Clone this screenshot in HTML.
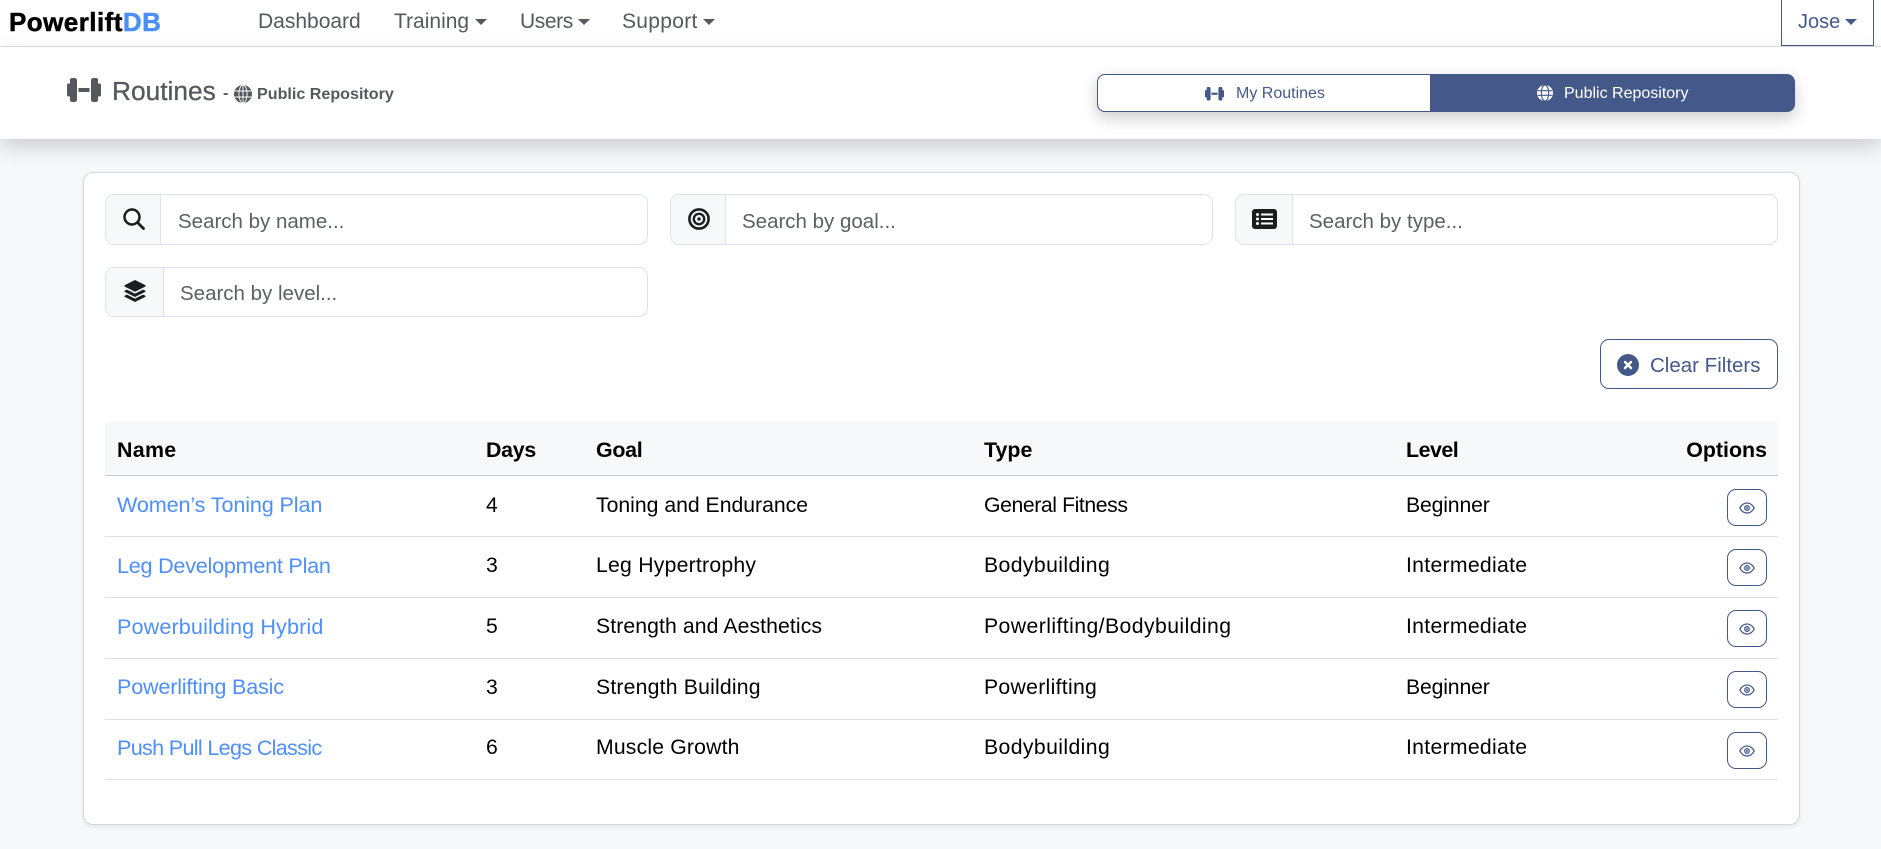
<!DOCTYPE html>
<html lang="en"><head><meta charset="utf-8"><title>Routines - PowerliftDB</title>
<style>
*{box-sizing:border-box}
html,body{margin:0;padding:0}
body{width:1881px;height:849px;overflow:hidden;position:relative;background:#f7f8fa;font-family:"Liberation Sans",sans-serif;color:#000}
.a{position:absolute}
.t{position:absolute;white-space:nowrap;line-height:30px;height:30px}
.nav{left:0;top:0;width:1881px;height:47px;background:#fff;border-bottom:1px solid #dfe0e6}
.n{font-size:21px;color:#55595e}
.caret{position:absolute;width:0;height:0;border-left:6px solid transparent;border-right:6px solid transparent;border-top:6.5px solid #55595e}
.head{left:0;top:47px;width:1881px;height:92px;background:#fff;box-shadow:0 8px 20px rgba(0,0,0,.17)}
.card{left:83px;top:172px;width:1717px;height:653px;background:#fff;border:1px solid #d5d7da;border-radius:10px;box-shadow:0 2px 5px rgba(0,0,0,.07)}
.inp{position:absolute;background:#fff;border:1px solid #dfe2e7;border-radius:9px;overflow:hidden}
.add{position:absolute;left:0;top:0;bottom:0;background:#f7f8fa;border-right:1px solid #dfe2e7}
.ph{font-size:20.5px;color:#5c6065}
.th{font-size:21.4px;font-weight:700;color:#000}
.td{font-size:21.2px;color:#000}
.lk{font-size:21.6px;color:#4f8ffb}
.line{position:absolute;left:105px;width:1673px;height:1px;background:#dfe0e4}
.eye{position:absolute;left:1727px;width:40px;height:37px;background:#fff;border:1px solid #44598a;border-radius:9px}
.eye svg{position:absolute;left:11px;top:12px}
</style></head><body>
<div class="a nav"></div>
<div class="t" style="left:9px;top:7px;font-size:26px;font-weight:700;letter-spacing:.45px;-webkit-text-stroke:.5px #000">Powerlift<span style="color:#4b8ff8;-webkit-text-stroke:.5px #4b8ff8">DB</span></div>
<div class="t n" style="left:258px;top:7px">Dashboard</div>
<div class="t n" style="left:394px;top:7px">Training</div><div class="caret" style="left:475px;top:19px"></div>
<div class="t n" style="left:520px;top:7px;letter-spacing:-.4px">Users</div><div class="caret" style="left:578px;top:19px"></div>
<div class="t n" style="left:622px;top:7px;letter-spacing:.3px">Support</div><div class="caret" style="left:703px;top:19px"></div>
<div class="a" style="left:1781px;top:-2px;width:93px;height:48px;border:1px solid #44598a;background:#fff"></div>
<div class="t n" style="left:1798px;top:7px;color:#44598a;font-size:20px">Jose</div><div class="caret" style="left:1845px;top:19px;border-top-color:#44598a"></div>

<div class="a head"></div>
<svg class="a" style="left:67px;top:78px" width="34" height="24" viewBox="0 0 34 24" fill="#55595e"><path d="M5 0h2.500C9 0 10 1 10 2.500v19c0 1.500-1 2.500-2.500 2.500H5c-1.200 0-2-.8-2-2v-3.500H1.500C.6 18.500 0 18 0 17V7c0-1 .6-1.500 1.500-1.500H3V2c0-1.200.8-2 2-2z"/><rect x="11.500" y="10" width="11" height="4"/><path d="M29 0h-2.500C25 0 24 1 24 2.500v19c0 1.500 1 2.500 2.500 2.500H29c1.200 0 2-.8 2-2v-3.500h1.500c.9 0 1.500-.5 1.500-1.500V7c0-1-.6-1.500-1.500-1.500H31V2c0-1.200-.8-2-2-2z"/></svg>
<div class="t" style="left:112px;top:76px;font-size:26.3px;font-weight:400;color:#55595e;-webkit-text-stroke:.3px #55595e">Routines</div>
<div class="t" style="left:223px;top:79px;font-size:16px;font-weight:700;color:#55595e">-</div>
<svg class="a" style="left:234px;top:85px" width="18" height="18" viewBox="0 0 24 24"><circle cx="12" cy="12" r="12" fill="#55595e"/><g fill="none" stroke="#fff" stroke-width="1.200"><ellipse cx="12" cy="12" rx="5.500" ry="12"/><path d="M1 8h22M1 16h22M12 0v24"/></g></svg>
<div class="t" style="left:257px;top:79px;font-size:16.100px;font-weight:700;color:#55595e">Public Repository</div>

<div class="a" style="left:1097px;top:74px;width:698px;height:38px;border-radius:8px;box-shadow:0 6px 16px rgba(0,0,0,.2);background:#44598a"></div>
<div class="a" style="left:1097px;top:74px;width:333px;height:38px;border:1.500px solid #44598a;border-right:0;border-radius:8px 0 0 8px;background:#fff"></div>
<svg class="a" style="left:1205px;top:87px" width="19" height="13.500" viewBox="0 0 34 24" fill="#44598a"><path d="M5 0h2.500C9 0 10 1 10 2.500v19c0 1.500-1 2.500-2.500 2.500H5c-1.200 0-2-.8-2-2v-3.500H1.500C.6 18.500 0 18 0 17V7c0-1 .6-1.500 1.500-1.500H3V2c0-1.200.8-2 2-2z"/><rect x="11.500" y="10" width="11" height="4"/><path d="M29 0h-2.500C25 0 24 1 24 2.500v19c0 1.500 1 2.500 2.500 2.500H29c1.200 0 2-.8 2-2v-3.500h1.500c.9 0 1.500-.5 1.500-1.500V7c0-1-.6-1.500-1.500-1.500H31V2c0-1.200-.8-2-2-2z"/></svg>
<div class="t" style="left:1236px;top:79px;font-size:16px;color:#44598a">My Routines</div>
<svg class="a" style="left:1537px;top:85px" width="16" height="16" viewBox="0 0 24 24"><circle cx="12" cy="12" r="12" fill="#fff"/><g fill="none" stroke="#44598a" stroke-width="1.700"><ellipse cx="12" cy="12" rx="5.500" ry="12"/><path d="M1 8.500h22M1 15.500h22"/></g></svg>
<div class="t" style="left:1564px;top:79px;font-size:16px;color:#fff">Public Repository</div>

<div class="a card"></div>

<div class="inp" style="left:105px;top:194px;width:543px;height:51px"><div class="add" style="width:55px"></div></div>
<svg class="a" style="left:123px;top:208px" width="22" height="22" viewBox="0 0 22 22" fill="none" stroke="#1b1e21"><circle cx="9" cy="9" r="7.500" stroke-width="2.500"/><path d="M14.500 14.500l6 6" stroke-width="2.800" stroke-linecap="round"/></svg>
<div class="t ph" style="left:178px;top:207px">Search by name...</div>

<div class="inp" style="left:670px;top:194px;width:543px;height:51px"><div class="add" style="width:55px"></div></div>
<svg class="a" style="left:688px;top:208px" width="22" height="22" viewBox="0 0 22 22"><circle cx="11" cy="11" r="9.600" fill="none" stroke="#1b1e21" stroke-width="2.600"/><circle cx="11" cy="11" r="5.200" fill="none" stroke="#1b1e21" stroke-width="2.400"/><circle cx="11" cy="11" r="1.700" fill="#1b1e21"/></svg>
<div class="t ph" style="left:742px;top:207px">Search by goal...</div>

<div class="inp" style="left:1235px;top:194px;width:543px;height:51px"><div class="add" style="width:57px"></div></div>
<svg class="a" style="left:1252px;top:209px" width="25" height="20" viewBox="0 0 25 20"><rect width="25" height="20" rx="3" fill="#1b1e21"/><g fill="#fff"><circle cx="5.500" cy="5.500" r="1.500"/><circle cx="5.500" cy="10" r="1.500"/><circle cx="5.500" cy="14.500" r="1.500"/><rect x="9" y="4.500" width="12" height="2"/><rect x="9" y="9" width="12" height="2"/><rect x="9" y="13.500" width="12" height="2"/></g></svg>
<div class="t ph" style="left:1309px;top:207px">Search by type...</div>

<div class="inp" style="left:105px;top:267px;width:543px;height:50px"><div class="add" style="width:58px"></div></div>
<svg class="a" style="left:124px;top:280px" width="22" height="22" viewBox="0 0 22 22" fill="#1b1e21"><path d="M11 0l10.500 5.300v1.200L11 11.800.5 6.500V5.300z"/><path d="M3 9.600L.5 10.800v1L11 17l10.500-5.200v-1L19 9.600l-8 4z"/><path d="M3 14.600L.5 15.800v1L11 22l10.500-5.200v-1L19 14.600l-8 4z"/></svg>
<div class="t ph" style="left:180px;top:279px">Search by level...</div>

<div class="a" style="left:1600px;top:339px;width:178px;height:50px;border:1px solid #44598a;border-radius:9px;background:#fff"></div>
<svg class="a" style="left:1617px;top:354px" width="22" height="22" viewBox="0 0 22 22"><circle cx="11" cy="11" r="11" fill="#44598a"/><path d="M8 8l6 6M14 8l-6 6" stroke="#fff" stroke-width="2.400" stroke-linecap="round"/></svg>
<div class="t" style="left:1650px;top:351px;font-size:20.500px;color:#44598a">Clear Filters</div>

<div class="a" style="left:105px;top:422px;width:1673px;height:54px;background:#f7f8fa;border-bottom:1px solid #c9cbcf"></div>
<div class="t th" style="left:117px;top:435px;letter-spacing:.3px">Name</div>
<div class="t th" style="left:486px;top:435px;letter-spacing:-.3px">Days</div>
<div class="t th" style="left:596px;top:435px;letter-spacing:-.3px">Goal</div>
<div class="t th" style="left:984px;top:435px">Type</div>
<div class="t th" style="left:1406px;top:435px;letter-spacing:-.5px">Level</div>
<div class="t th" style="right:114px;top:435px">Options</div>

<div class="t lk" style="left:117px;top:490px;letter-spacing:-.13px">Women’s Toning Plan</div>
<div class="t td" style="left:486px;top:491px">4</div>
<div class="t td" style="left:596px;top:491px">Toning and Endurance</div>
<div class="t td" style="left:984px;top:491px;letter-spacing:-.4px">General Fitness</div>
<div class="t td" style="left:1406px;top:491px;letter-spacing:-.15px">Beginner</div>
<div class="eye" style="top:489px"><svg width="16" height="12" viewBox="0 0 16 12" fill="none" stroke="#44598a" stroke-width="1.300"><path d="M.8 6C2.500 2.800 5 1 8 1s5.500 1.800 7.200 5C13.500 9.200 11 11 8 11S2.500 9.200.8 6z"/><circle cx="8" cy="6" r="2.300"/><circle cx="8" cy="6" r="1" fill="#44598a" stroke="none"/></svg></div>
<div class="line" style="top:536px"></div>

<div class="t lk" style="left:117px;top:551px;letter-spacing:-.24px">Leg Development Plan</div>
<div class="t td" style="left:486px;top:551px">3</div>
<div class="t td" style="left:596px;top:551px;letter-spacing:.24px">Leg Hypertrophy</div>
<div class="t td" style="left:984px;top:551px;letter-spacing:.4px">Bodybuilding</div>
<div class="t td" style="left:1406px;top:551px;letter-spacing:.3px">Intermediate</div>
<div class="eye" style="top:549px"><svg width="16" height="12" viewBox="0 0 16 12" fill="none" stroke="#44598a" stroke-width="1.300"><path d="M.8 6C2.500 2.800 5 1 8 1s5.500 1.800 7.200 5C13.500 9.200 11 11 8 11S2.500 9.200.8 6z"/><circle cx="8" cy="6" r="2.300"/><circle cx="8" cy="6" r="1" fill="#44598a" stroke="none"/></svg></div>
<div class="line" style="top:597px"></div>

<div class="t lk" style="left:117px;top:612px;letter-spacing:.12px">Powerbuilding Hybrid</div>
<div class="t td" style="left:486px;top:612px">5</div>
<div class="t td" style="left:596px;top:612px;letter-spacing:.1px">Strength and Aesthetics</div>
<div class="t td" style="left:984px;top:612px;letter-spacing:.43px">Powerlifting/Bodybuilding</div>
<div class="t td" style="left:1406px;top:612px;letter-spacing:.3px">Intermediate</div>
<div class="eye" style="top:610px"><svg width="16" height="12" viewBox="0 0 16 12" fill="none" stroke="#44598a" stroke-width="1.300"><path d="M.8 6C2.500 2.800 5 1 8 1s5.500 1.800 7.200 5C13.500 9.200 11 11 8 11S2.500 9.200.8 6z"/><circle cx="8" cy="6" r="2.300"/><circle cx="8" cy="6" r="1" fill="#44598a" stroke="none"/></svg></div>
<div class="line" style="top:658px"></div>

<div class="t lk" style="left:117px;top:672px;letter-spacing:-.2px">Powerlifting Basic</div>
<div class="t td" style="left:486px;top:673px">3</div>
<div class="t td" style="left:596px;top:673px;letter-spacing:.2px">Strength Building</div>
<div class="t td" style="left:984px;top:673px;letter-spacing:.3px">Powerlifting</div>
<div class="t td" style="left:1406px;top:673px;letter-spacing:-.15px">Beginner</div>
<div class="eye" style="top:671px"><svg width="16" height="12" viewBox="0 0 16 12" fill="none" stroke="#44598a" stroke-width="1.300"><path d="M.8 6C2.500 2.800 5 1 8 1s5.500 1.800 7.200 5C13.500 9.200 11 11 8 11S2.500 9.200.8 6z"/><circle cx="8" cy="6" r="2.300"/><circle cx="8" cy="6" r="1" fill="#44598a" stroke="none"/></svg></div>
<div class="line" style="top:719px"></div>

<div class="t lk" style="left:117px;top:733px;letter-spacing:-.69px">Push Pull Legs Classic</div>
<div class="t td" style="left:486px;top:733px">6</div>
<div class="t td" style="left:596px;top:733px;letter-spacing:.18px">Muscle Growth</div>
<div class="t td" style="left:984px;top:733px;letter-spacing:.4px">Bodybuilding</div>
<div class="t td" style="left:1406px;top:733px;letter-spacing:.3px">Intermediate</div>
<div class="eye" style="top:732px"><svg width="16" height="12" viewBox="0 0 16 12" fill="none" stroke="#44598a" stroke-width="1.300"><path d="M.8 6C2.500 2.800 5 1 8 1s5.500 1.800 7.200 5C13.500 9.200 11 11 8 11S2.500 9.200.8 6z"/><circle cx="8" cy="6" r="2.300"/><circle cx="8" cy="6" r="1" fill="#44598a" stroke="none"/></svg></div>
<div class="line" style="top:779px"></div>
</body></html>
